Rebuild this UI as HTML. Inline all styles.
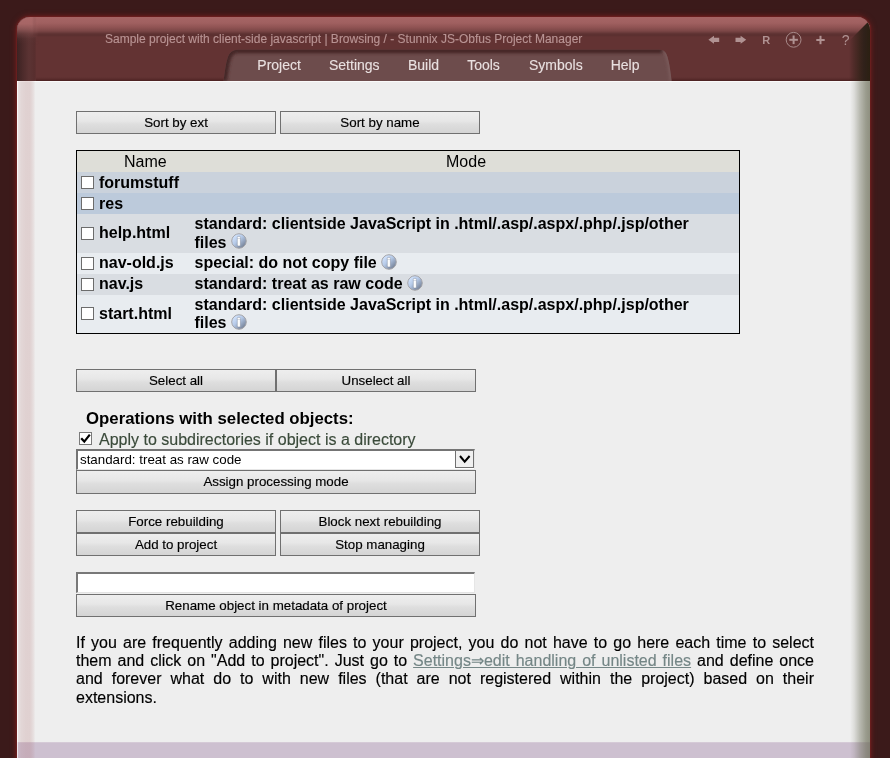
<!DOCTYPE html>
<html><head><meta charset="utf-8">
<style>
html,body{margin:0;padding:0;}
body{width:890px;height:758px;overflow:hidden;background:#3b1a1a;font-family:"Liberation Sans",sans-serif;position:relative;}
#glow{position:absolute;left:17px;top:17px;width:853px;height:800px;border-radius:13px 13px 0 0;box-shadow:0 0 1.5px 1px #6e2020,0 0 5px 2px #611d1d;}
#panel{will-change:transform;position:absolute;left:17px;top:17px;width:853px;height:800px;border-radius:13px 13px 0 0;overflow:hidden;background:#eeeeee;}
#hdr{position:absolute;left:0;top:0;width:853px;height:64px;background:linear-gradient(to bottom,#633333 0px,#633333 60px,#5a2c2c 62px,#4a2020 64px);}
#hdrL{position:absolute;left:0;top:0;width:19px;height:64px;background:linear-gradient(to right,#3c2222 0,#4d2b2b 6px,#5b3333 12px,#582e2e 18px,#613232 19px);}
#hdrR{position:absolute;right:0;top:0;width:21px;height:64px;background:linear-gradient(to right,rgba(74,42,38,0) 0,rgba(66,38,33,0.6) 5px,#3b251d 11px,#30211a 15px,#2b2012 21px);clip-path:polygon(100% 0,100% 100%,0 100%,0 24px,24px 0);}
#hdrT{-webkit-mask-image:linear-gradient(to right,transparent 0,transparent 12px,#000 20px);mask-image:linear-gradient(to right,transparent 0,transparent 12px,#000 20px);position:absolute;left:0;top:0;width:853px;height:20px;background:linear-gradient(to bottom,#a66565 0,#a06060 6px,#915454 10px,#7b4646 14px,#623535 16.5px,#5a2f2f 18px,#5e3131 19px,#633333 20px);}
#hdrC{position:absolute;left:0;top:0;width:22px;height:30px;background:linear-gradient(to bottom,#ab6969 0,#a66565 7px,rgba(150,92,92,0.85) 12px,rgba(125,75,75,0.5) 17px,rgba(100,58,58,0.2) 22px,rgba(90,50,50,0) 28px);-webkit-mask-image:linear-gradient(to right,#000 0,#000 15px,transparent 22px);mask-image:linear-gradient(to right,#000 0,#000 15px,transparent 22px);}
#title{-webkit-text-stroke:0.15px currentColor;position:absolute;left:88px;top:15px;font-size:12px;color:#b89393;white-space:nowrap;}
#menut span{-webkit-text-stroke:0.12px currentColor;position:absolute;top:40px;font-size:14px;line-height:16px;color:#e9e0e0;white-space:nowrap;}
#sideL{position:absolute;left:0;top:64px;width:19px;height:740px;background:linear-gradient(to right,rgba(255,255,255,0.6) 0,rgba(255,255,255,0.6) 1px,rgba(170,100,100,0.1) 1.5px,rgba(170,100,100,0.17) 4px,rgba(170,100,100,0.21) 9px,rgba(170,100,100,0.21) 13px,rgba(170,100,100,0.12) 16px,rgba(170,100,100,0) 18.5px);z-index:5;}
#sideR{position:absolute;right:0;top:64px;width:20px;height:740px;background:linear-gradient(to right,rgba(102,104,81,0) 0,rgba(102,104,81,0.12) 4px,rgba(102,104,81,0.4) 10px,rgba(102,104,81,0.62) 16px,rgba(102,104,81,0.7) 20px);z-index:5;}
#topline{position:absolute;left:0;top:64px;width:853px;height:1px;background:#fafafa;}
#foot{position:absolute;left:0;top:725px;width:853px;height:40px;background:linear-gradient(to bottom,#ddd4dd 0,#cdc0d0 1px);}
.btn{-webkit-text-stroke:0.15px currentColor;position:absolute;box-sizing:border-box;height:23px;border:1px solid #707070;background:linear-gradient(to bottom,#eeeeee 0%,#e7e7e7 42%,#dedede 58%,#d4d4d4 100%);font-size:13.33px;color:#000;text-align:center;line-height:21px;}
#tbl{position:absolute;left:59px;top:133px;width:664px;height:184px;box-sizing:border-box;border:1px solid #000;background:#e8ecf0;}
.row{position:absolute;left:0;width:662px;}
.cb{position:absolute;left:4px;width:11px;height:11px;border:1px solid #6c6c6c;background:#fff;}
.nm{position:absolute;left:22px;font-weight:bold;font-size:16px;color:#000;white-space:nowrap;}
.md{position:absolute;left:117.5px;font-weight:bold;font-size:16px;color:#000;white-space:nowrap;line-height:18px;}
.info{display:inline-block;width:16px;height:16px;vertical-align:-2.3px;margin-left:0px;}
.ln{-webkit-text-stroke:0.15px currentColor;position:absolute;left:59px;width:738px;height:20px;font-size:16px;line-height:20px;text-align:justify;text-align-last:justify;color:#000;white-space:nowrap;}
.ln a{color:#748686;text-decoration:underline;}
</style></head><body>
<div id="glow"></div>
<div id="panel">
 <div id="hdr"></div><div id="hdrL"></div><div id="hdrT"></div><div id="hdrC"></div><div id="hdrR"></div>
 <div id="title">Sample project with client-side javascript | Browsing / - Stunnix JS-Obfus Project Manager</div>
 <svg id="menu" width="470" height="34" viewBox="220 48 470 34" style="position:absolute;left:203px;top:31px">
  <defs>
   <clipPath id="tabc"><path d="M223.6,81 C224.7,72 225.7,64 227.6,58 C229.4,52.5 232.5,49.8 238,49.8 L660,49.8 C664.5,49.8 666.4,52.8 667.8,58 C669.5,64 670.6,72 671.6,81 Z"/></clipPath>
   <filter id="bl" x="-10%" y="-50%" width="120%" height="200%"><feGaussianBlur stdDeviation="1.4"/></filter>
  </defs>
  <path d="M223.6,81 C224.7,72 225.7,64 227.6,58 C229.4,52.5 232.5,49.8 238,49.8 L660,49.8 C664.5,49.8 666.4,52.8 667.8,58 C669.5,64 670.6,72 671.6,81 Z" fill="#6d4c4c"/>
  <g clip-path="url(#tabc)">
   <path d="M223.6,81 C224.7,72 225.7,64 227.6,58 C229.4,52.5 232.5,49.8 238,49.8 L662,49.8" fill="none" stroke="#452525" stroke-width="7" filter="url(#bl)"/>
   <path d="M664.5,51.5 C666,52.5 666.6,53.5 667.8,58 C669.5,64 670.6,72 671.6,81" fill="none" stroke="#7b5c5c" stroke-width="3.5" filter="url(#bl)"/>
  </g>
 </svg>
 <div id="menut">
  <span style="left:240.3px">Project</span><span style="left:312px">Settings</span><span style="left:390.9px">Build</span><span style="left:450.2px">Tools</span><span style="left:512px">Symbols</span><span style="left:593.7px">Help</span>
 </div>

 <svg id="icons" width="160" height="28" viewBox="0 0 160 28" style="position:absolute;left:683px;top:9px">
  <g fill="#b09292">
   <path d="M8.4 13.8 L14 9.8 L14 11.7 L19.2 11.7 L19.2 15.9 L14 15.9 L14 17.7 Z"/>
   <path d="M46.2 13.8 L40.6 9.8 L40.6 11.7 L35.5 11.7 L35.5 15.9 L40.6 15.9 L40.6 17.7 Z"/>
   <rect x="89.3" y="12.8" width="8.6" height="2"/><rect x="92.6" y="9.5" width="2" height="8.6"/>
   <rect x="116.3" y="13" width="8.4" height="2"/><rect x="119.5" y="9.8" width="2" height="8.4"/>
   <text x="62.3" y="17.8" font-family="Liberation Sans, sans-serif" font-size="11" font-weight="bold">R</text>
   <text x="141.8" y="19" font-family="Liberation Sans, sans-serif" font-size="14">?</text>
  </g>
  <circle cx="93.6" cy="13.8" r="7.4" fill="none" stroke="#a88a8a" stroke-width="1"/>
 </svg>
 <div id="topline"></div><div id="foot"></div><div id="sideL"></div><div id="sideR"></div>

 <div class="btn" style="left:59px;top:94px;width:200px">Sort by ext</div>
 <div class="btn" style="left:263px;top:94px;width:200px">Sort by name</div>

 <svg width="0" height="0" style="position:absolute"><defs><linearGradient id="ig" x1="0.15" y1="0.15" x2="0.85" y2="0.9"><stop offset="0" stop-color="#d2e3fc"/><stop offset="0.4" stop-color="#b6cae8"/><stop offset="1" stop-color="#737f94"/></linearGradient></defs></svg>
 <div id="tbl">
  <div class="row" style="top:0;height:21px;background:#deded8"><span style="position:absolute;left:47px;top:2px;font-size:16px">Name</span><span style="position:absolute;left:369px;top:2px;font-size:16px">Mode</span></div>
  <div class="row" style="top:21px;height:21px;background:#cad2dc"><div class="cb" style="top:4px"></div><span class="nm" style="top:2px">forumstuff</span></div>
  <div class="row" style="top:42px;height:21px;background:#bccadb"><div class="cb" style="top:4px"></div><span class="nm" style="top:2px">res</span></div>
  <div class="row" style="top:63px;height:39px;background:#d9dde2"><div class="cb" style="top:13px"></div><span class="nm" style="top:10px">help.html</span><span class="md" style="top:0px;line-height:19px">standard: clientside JavaScript in .html/.asp/.aspx/.php/.jsp/other<br>files <svg class="info" style="vertical-align:-1.3px" viewBox="0 0 16 16"><circle cx="8" cy="8" r="8" fill="rgba(255,255,255,0.4)"/><circle cx="8" cy="8" r="7.3" fill="url(#ig)" stroke="#a2a2a6" stroke-width="1"/><rect x="6.3" y="3.4" width="3.1" height="9.5" rx="0.9" fill="#fdfdfd" stroke="rgba(100,112,135,0.6)" stroke-width="0.6"/><rect x="6.3" y="5.3" width="3.1" height="0.6" fill="rgba(140,155,180,0.55)"/></svg></span></div>
  <div class="row" style="top:102px;height:21px;background:#e8ecf0"><div class="cb" style="top:4px"></div><span class="nm" style="top:1px">nav-old.js</span><span class="md" style="top:1px">special: do not copy file <svg class="info" viewBox="0 0 16 16"><circle cx="8" cy="8" r="8" fill="rgba(255,255,255,0.4)"/><circle cx="8" cy="8" r="7.3" fill="url(#ig)" stroke="#a2a2a6" stroke-width="1"/><rect x="6.3" y="3.4" width="3.1" height="9.5" rx="0.9" fill="#fdfdfd" stroke="rgba(100,112,135,0.6)" stroke-width="0.6"/><rect x="6.3" y="5.3" width="3.1" height="0.6" fill="rgba(140,155,180,0.55)"/></svg></span></div>
  <div class="row" style="top:123px;height:21px;background:#d9dde2"><div class="cb" style="top:4px"></div><span class="nm" style="top:1px">nav.js</span><span class="md" style="top:1px">standard: treat as raw code <svg class="info" viewBox="0 0 16 16"><circle cx="8" cy="8" r="8" fill="rgba(255,255,255,0.4)"/><circle cx="8" cy="8" r="7.3" fill="url(#ig)" stroke="#a2a2a6" stroke-width="1"/><rect x="6.3" y="3.4" width="3.1" height="9.5" rx="0.9" fill="#fdfdfd" stroke="rgba(100,112,135,0.6)" stroke-width="0.6"/><rect x="6.3" y="5.3" width="3.1" height="0.6" fill="rgba(140,155,180,0.55)"/></svg></span></div>
  <div class="row" style="top:144px;height:38px;background:#e8ecf0"><div class="cb" style="top:12px"></div><span class="nm" style="top:10px">start.html</span><span class="md" style="top:1px">standard: clientside JavaScript in .html/.asp/.aspx/.php/.jsp/other<br>files <svg class="info" viewBox="0 0 16 16"><circle cx="8" cy="8" r="8" fill="rgba(255,255,255,0.4)"/><circle cx="8" cy="8" r="7.3" fill="url(#ig)" stroke="#a2a2a6" stroke-width="1"/><rect x="6.3" y="3.4" width="3.1" height="9.5" rx="0.9" fill="#fdfdfd" stroke="rgba(100,112,135,0.6)" stroke-width="0.6"/><rect x="6.3" y="5.3" width="3.1" height="0.6" fill="rgba(140,155,180,0.55)"/></svg></span></div>
 </div>

 <div class="btn" style="left:59px;top:352px;width:200px">Select all</div>
 <div class="btn" style="left:259px;top:352px;width:200px">Unselect all</div>

 <div style="position:absolute;left:69px;top:392px;font-size:16.8px;line-height:20px;font-weight:bold;white-space:nowrap">Operations with selected objects:</div>
 <div class="cb" style="left:62px;top:415px;border-color:#7a7a7a"><svg width="11" height="11" viewBox="0 0 11 11" style="position:absolute;left:0;top:0"><path d="M1.2 5.2 L4.3 8.6 L9.8 1.6" stroke="#000" stroke-width="2.2" fill="none"/></svg></div>
 <div style="-webkit-text-stroke:0.15px currentColor;position:absolute;left:82px;top:414px;font-size:16px;color:#3a4a3a;white-space:nowrap">Apply to subdirectories if object is a directory</div>
 <div style="position:absolute;left:59px;top:432px;width:399px;height:21px;box-sizing:border-box;border-top:2px solid #747474;border-left:2px solid #747474;border-right:1px solid #e6e6e6;border-bottom:1px solid #e6e6e6;background:#fff;font-size:13.33px;line-height:18px;padding-left:2px;white-space:nowrap">standard: treat as raw code
   <div style="position:absolute;right:0px;top:0px;width:19px;height:17px;box-sizing:border-box;border:1px solid #707070;border-top:none;background:#f0f0f0"><svg width="17" height="16" viewBox="0 0 17 16" style="position:absolute;left:0;top:0"><path d="M4 5 L8.7 10.6 L13.6 5" stroke="#000" stroke-width="2" fill="none"/></svg></div>
 </div>
 <div class="btn" style="left:59px;top:453px;width:400px;height:24px;line-height:21px">Assign processing mode</div>

 <div class="btn" style="left:59px;top:493px;width:200px">Force rebuilding</div>
 <div class="btn" style="left:263px;top:493px;width:200px">Block next rebuilding</div>
 <div class="btn" style="left:59px;top:516px;width:200px">Add to project</div>
 <div class="btn" style="left:263px;top:516px;width:200px">Stop managing</div>

 <div style="position:absolute;left:59px;top:555px;width:399px;height:21px;box-sizing:border-box;border-right:1px solid #e6e6e6;border-bottom:1px solid #e3e3e3;border-top:2px solid #787878;border-left:2px solid #787878;background:#fff"></div>
 <div class="btn" style="left:59px;top:577px;width:400px">Rename object in metadata of project</div>

 <div class="ln" style="top:616px">If you are frequently adding new files to your project, you do not have to go here each time to select</div>
 <div class="ln" style="top:634px">them and click on "Add to project". Just go to <a>Settings&#x21D2;edit handling of unlisted files</a> and define once</div>
 <div class="ln" style="top:652px">and forever what do to with new files (that are not registered within the project) based on their</div>
 <div class="ln" style="top:671px;text-align-last:left">extensions.</div>
</div>
</body></html>
